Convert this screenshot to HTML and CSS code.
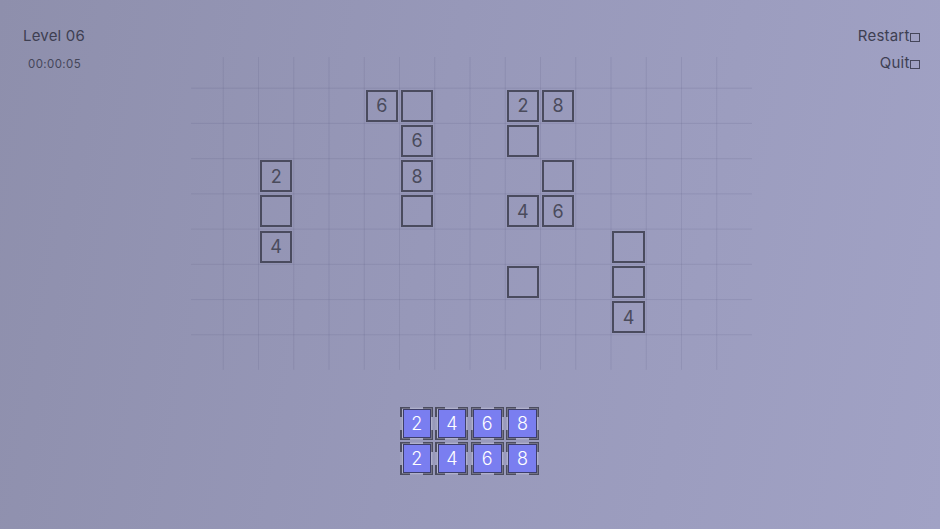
FILE: index.html
```html
<!DOCTYPE html>
<html>
<head>
<meta charset="utf-8">
<link rel="stylesheet" href="styles.css">
</head>
<body>
<div class="screen">
  <aside class="hud hud-left">
    <div class="level">Level 06</div>
    <div class="timer">00:00:05</div>
  </aside>
  <main class="play">
    <div class="board">
      <div class="box c6 r2">6</div>
      <div class="box c7 r2"></div>
      <div class="box c7 r3">6</div>
      <div class="box c7 r4">8</div>
      <div class="box c7 r5"></div>
      <div class="box c3 r4">2</div>
      <div class="box c3 r5"></div>
      <div class="box c3 r6">4</div>
      <div class="box c10 r2">2</div>
      <div class="box c11 r2">8</div>
      <div class="box c10 r3"></div>
      <div class="box c11 r4"></div>
      <div class="box c10 r5">4</div>
      <div class="box c11 r5">6</div>
      <div class="box c13 r6"></div>
      <div class="box c10 r7"></div>
      <div class="box c13 r7"></div>
      <div class="box c13 r8">4</div>
    </div>
    <div class="tray">
      <div class="tile"><span class="face">2</span></div>
      <div class="tile"><span class="face">4</span></div>
      <div class="tile"><span class="face">6</span></div>
      <div class="tile"><span class="face">8</span></div>
      <div class="tile"><span class="face">2</span></div>
      <div class="tile"><span class="face">4</span></div>
      <div class="tile"><span class="face">6</span></div>
      <div class="tile"><span class="face">8</span></div>
    </div>
  </main>
  <aside class="hud hud-right">
    <div class="menu-item">Restart<span class="tofu"></span></div>
    <div class="menu-item quit">Quit<span class="tofu"></span></div>
  </aside>
</div>
</body>
</html>
```

FILE: styles.css
```css
html, body {
  margin: 0;
  padding: 0;
}
body {
  width: 940px;
  height: 529px;
  overflow: hidden;
  font-family: "Inter", "Liberation Sans", sans-serif;
}
.screen {
  width: 940px;
  height: 529px;
  display: flex;
  align-items: flex-start;
  background: linear-gradient(100deg, #8e8fac 0%, #9798b9 45%, #a1a2c5 100%);
  color: #3e3f52;
}
.hud {
  width: 188px;
  flex: none;
}
.hud-left {
  padding: 27px 0 0 23px;
  box-sizing: border-box;
}
.level {
  font-size: 15px;
  line-height: 18px;
  letter-spacing: 0.2px;
}
.timer {
  margin: 12px 0 0 5px;
  font-size: 11.5px;
  line-height: 14px;
  letter-spacing: 0.4px;
  color: #45465a;
}
.hud-right {
  padding: 27px 20px 0 0;
  box-sizing: border-box;
  text-align: right;
}
.menu-item {
  font-size: 15px;
  line-height: 18px;
  letter-spacing: 0.2px;
}
.menu-item.quit {
  margin-top: 9px;
}
.tofu {
  display: inline-block;
  width: 8px;
  height: 7px;
  border: 1px solid #45465a;
  margin-left: 0.5px;
  vertical-align: -1px;
}
.play {
  width: 564px;
  flex: none;
  padding-top: 52.75px;
}
.board {
  width: 564px;
  height: 317.25px;
  display: grid;
  grid-template-columns: repeat(16, 35.25px);
  grid-template-rows: repeat(9, 35.25px);
  background-image: url("data:image/svg+xml,%3Csvg xmlns='http://www.w3.org/2000/svg' width='564' height='317.25' viewBox='0 0 564 317.25'%3E%3Cpath shape-rendering='crispEdges' stroke='%23454870' stroke-opacity='0.13' stroke-width='1' fill='none' d='M35.25 4V317 M70.5 4V317 M105.75 4V317 M141 4V317 M176.25 4V317 M211.5 4V317 M246.75 4V317 M282 4V317 M317.25 4V317 M352.5 4V317 M387.75 4V317 M423 4V317 M458.25 4V317 M493.5 4V317 M528.75 4V317 M3 35.25H564 M3 70.5H564 M3 105.75H564 M3 141H564 M3 176.25H564 M3 211.5H564 M3 246.75H564 M3 282H564'/%3E%3C/svg%3E");
  background-repeat: no-repeat;
  background-size: 564px 317.25px;
}
.box {
  box-sizing: border-box;
  width: 32.5px;
  height: 32px;
  align-self: center;
  justify-self: center;
  border: 2px solid #4a4b5e;
  display: flex;
  align-items: center;
  justify-content: center;
  font-size: 18px;
  color: #4a4b5c;
}
.c3 { grid-column: 3; }
.c6 { grid-column: 6; }
.c7 { grid-column: 7; }
.c10 { grid-column: 10; }
.c11 { grid-column: 11; }
.c13 { grid-column: 13; }
.r2 { grid-row: 2; }
.r3 { grid-row: 3; }
.r4 { grid-row: 4; }
.r5 { grid-row: 5; }
.r6 { grid-row: 6; }
.r7 { grid-row: 7; }
.r8 { grid-row: 8; }
.tray {
  margin: 35.25px 0 0 211.5px;
  display: grid;
  grid-template-columns: repeat(4, 35.25px);
  grid-template-rows: repeat(2, 35px);
}
.tile {
  --k: #4c4d5f;
  box-sizing: border-box;
  width: 33px;
  height: 33px;
  margin: 1.75px 0 0 0.5px;
  padding: 2px 2px 2px 2.5px;
  background:
    linear-gradient(var(--k), var(--k)) left top / 10px 2px no-repeat,
    linear-gradient(var(--k), var(--k)) left top / 2px 10px no-repeat,
    linear-gradient(var(--k), var(--k)) right top / 10px 2px no-repeat,
    linear-gradient(var(--k), var(--k)) right top / 2px 10px no-repeat,
    linear-gradient(var(--k), var(--k)) left bottom / 10px 2px no-repeat,
    linear-gradient(var(--k), var(--k)) left bottom / 2px 10px no-repeat,
    linear-gradient(var(--k), var(--k)) right bottom / 10px 2px no-repeat,
    linear-gradient(var(--k), var(--k)) right bottom / 2px 10px no-repeat,
    rgba(255, 255, 255, 0.06);
}
.face {
  box-sizing: border-box;
  display: flex;
  align-items: center;
  justify-content: center;
  width: 100%;
  height: 100%;
  background: #7a7ef0;
  border: 1px solid #3d3e6a;
  box-shadow: 0 0 0 1px rgba(230, 230, 245, 0.25);
  color: #ffffff;
  font-size: 18px;
  font-weight: 300;
}
```
